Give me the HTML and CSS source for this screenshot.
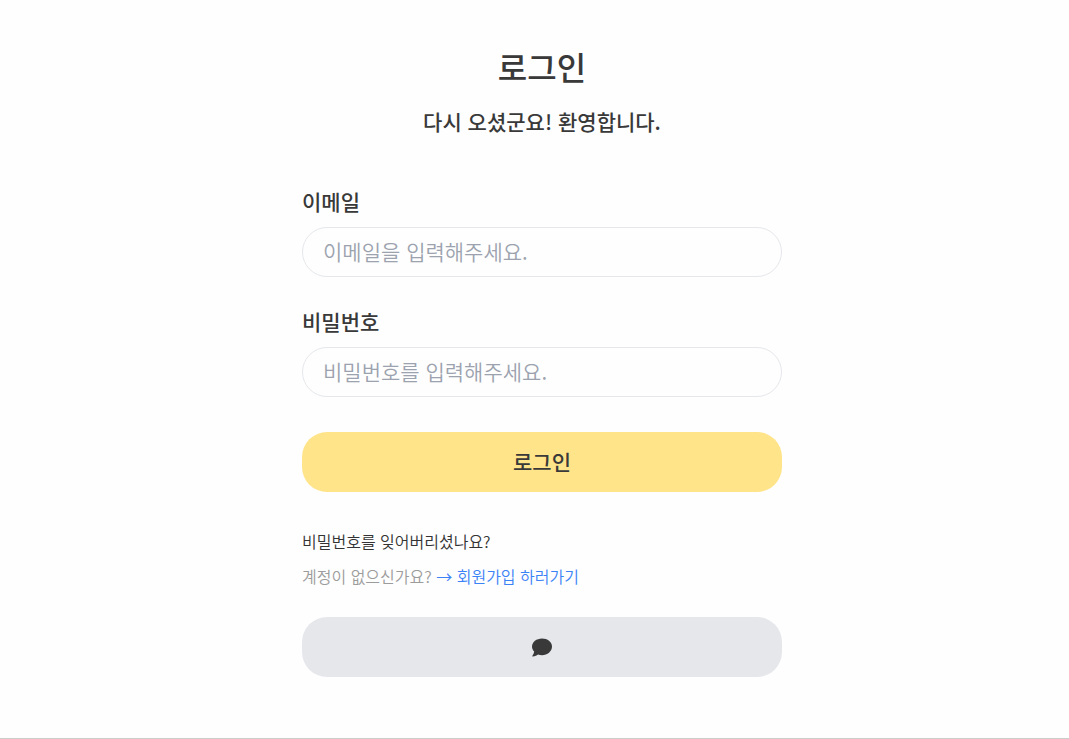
FILE: index.html
```html
<!DOCTYPE html>
<html lang="ko">
<head>
<meta charset="utf-8">
<meta name="viewport" content="width=device-width, initial-scale=1">
<title>로그인</title>
<link rel="stylesheet" href="styles.css">
</head>
<body>
<main class="page">
  <form class="login">
    <header class="intro">
      <h1 class="title">로그인</h1>
      <p class="welcome">다시 오셨군요! 환영합니다.</p>
    </header>
    <div class="field">
      <label class="label" for="email">이메일</label>
      <input class="input" id="email" type="email" placeholder="이메일을 입력해주세요.">
    </div>
    <div class="field">
      <label class="label" for="password">비밀번호</label>
      <input class="input" id="password" type="password" placeholder="비밀번호를 입력해주세요.">
    </div>
    <button class="button submit" type="submit">로그인</button>
    <div class="links">
      <a class="forgot" href="#reset">비밀번호를 잊어버리셨나요?</a>
      <p class="signup">계정이 없으신가요? <a class="join" href="#signup">→ 회원가입 하러가기</a></p>
    </div>
    <button class="button social" type="button" aria-label="카카오 로그인">
      <svg class="bubble" viewBox="0 0 20 20" aria-hidden="true"><path d="M10 1.500C4.500 1.500 0 5.100 0 9.500c0 2 .8 3.700 2.200 5.100-.2 1.500-.9 3-1.800 4.100-.3.400-.1.800.4.800 2.200 0 4-.9 5.200-1.900 1.200.5 2.600.7 4 .7 5.500 0 10-3.900 10-8.700S15.500 1.500 10 1.500z"/></svg>
    </button>
  </form>
</main>
</body>
</html>
```
FILE: styles.css
```css
* { box-sizing: border-box; }
body {
  margin: 0;
  background: #fefefe;
  color: #393939;
  font-family: "Noto Sans CJK KR", sans-serif;
}
h1, p { margin: 0; }
.page {
  min-height: 100vh;
  display: flex;
  justify-content: center;
  padding: 42px 0 61px 15px;
  border-bottom: 1px solid #ccc;
}
.login {
  width: 480px;
  max-width: 100%;
  display: flex;
  flex-direction: column;
}
.intro {
  text-align: center;
  margin-bottom: 52px;
}
.title {
  font-size: 32px;
  line-height: 48px;
  font-weight: 500;
  margin-bottom: 17px;
}
.welcome, .label {
  font-size: 21px;
  line-height: 28px;
  font-weight: 500;
}
.field {
  display: flex;
  flex-direction: column;
  gap: 12px;
  margin-bottom: 30px;
}
.input {
  height: 50px;
  width: 100%;
  padding: 0 20px 2px;
  border: 1px solid #e5e7eb;
  border-radius: 25px;
  background: transparent;
  color: inherit;
  font: 350 21px/30px "Noto Sans CJK KR", sans-serif;
}
.input::placeholder { color: #9ca3af; opacity: 1; }
.button {
  height: 60px;
  padding: 0 20px;
  border: 0;
  border-radius: 25px;
  color: inherit;
  font: 500 21px/30px "Noto Sans CJK KR", sans-serif;
  display: flex;
  align-items: center;
  justify-content: center;
}
.submit { background: #ffe48a; margin-top: 5px; padding-bottom: 2px; }
.social { background: #e5e7eb; }
.links {
  display: flex;
  flex-direction: column;
  align-items: flex-start;
  gap: 11px;
  margin: 37px 0 29px;
  font-size: 16px;
  line-height: 24px;
  font-weight: 350;
}
.links a { text-decoration: none; }
.forgot { color: #333; }
.signup { color: #9c9c9c; }
.join { color: #3b82f6; }
.bubble { width: 20px; height: 20px; fill: #393939; }
```
